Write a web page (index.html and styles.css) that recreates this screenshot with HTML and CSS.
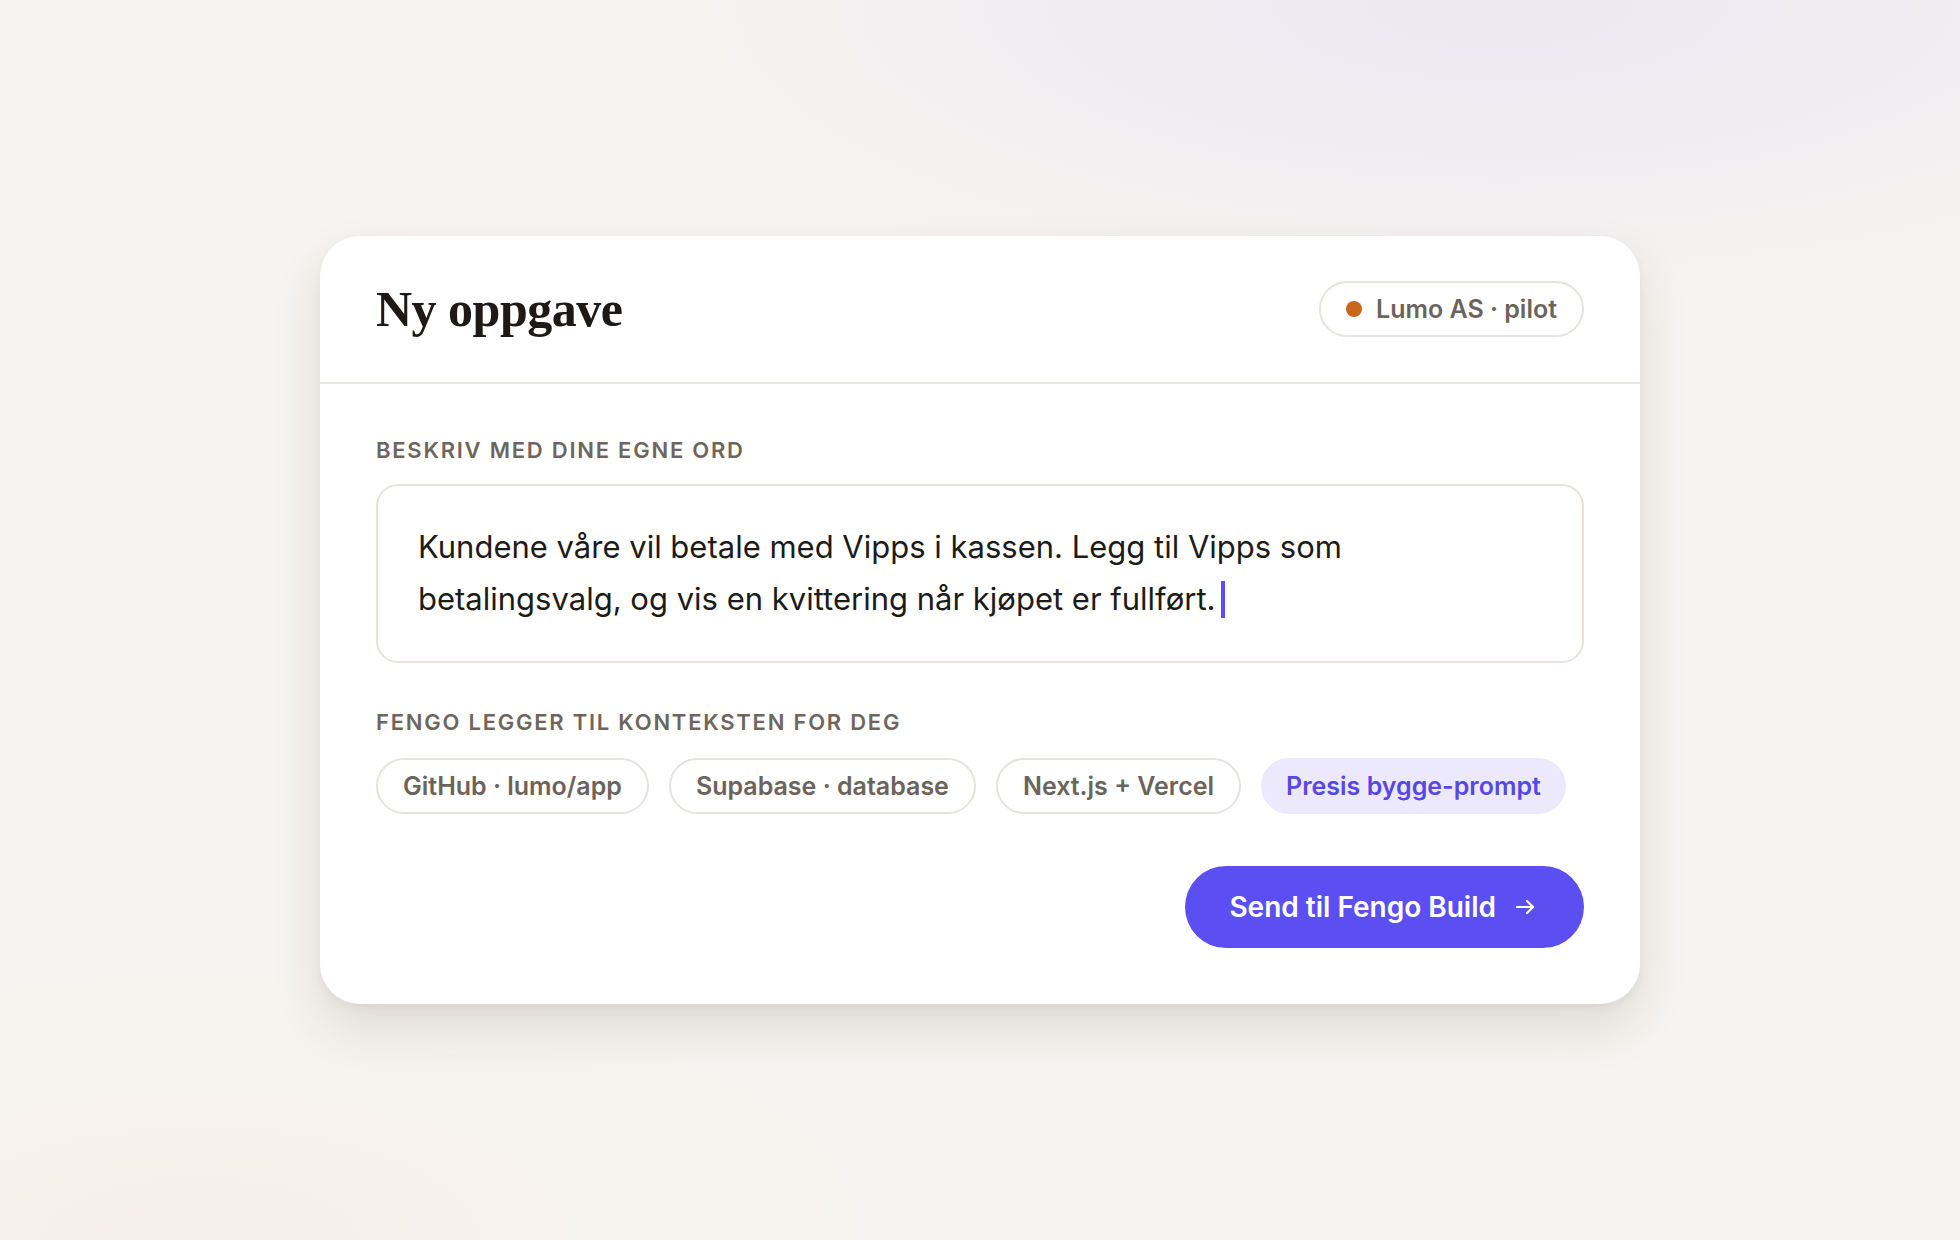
FILE: index.html
```html
<!DOCTYPE html>
<html lang="no">
<head>
    <meta charset="UTF-8">
    <meta name="viewport" content="width=device-width, initial-scale=1.0">
    <title>Ny oppgave</title>
    <link rel="stylesheet" href="styles.css">
</head>
<body>
    <div class="task-card">
        <div class="task-header">
            <h1 class="task-title">Ny oppgave</h1>
            <div class="org-badge">
                <span class="org-dot"></span>
                <span>Lumo AS · pilot</span>
            </div>
        </div>

        <div class="task-body">
            <div class="field-label">Beskriv med dine egne ord</div>
            <div class="prompt-box">
                <p class="prompt-text">Kundene våre vil betale med Vipps i kassen. Legg til Vipps som betalingsvalg, og vis en kvittering når kjøpet er fullført.<span class="caret"></span></p>
            </div>

            <div class="field-label second">Fengo legger til konteksten for deg</div>
            <div class="chips">
                <span class="chip">GitHub · lumo/app</span>
                <span class="chip">Supabase · database</span>
                <span class="chip">Next.js + Vercel</span>
                <span class="chip chip-accent">Presis bygge-prompt</span>
            </div>

            <div class="actions">
                <button class="send-btn">
                    <span>Send til Fengo Build</span>
                    <svg width="24" height="24" viewBox="0 0 24 24" fill="none" stroke="currentColor" stroke-width="2.2" stroke-linecap="round" stroke-linejoin="round">
                        <line x1="3" y1="12" x2="19" y2="12"></line>
                        <polyline points="13 6 19 12 13 18"></polyline>
                    </svg>
                </button>
            </div>
        </div>
    </div>
</body>
</html>
```

FILE: styles.css
```css
body {
    margin: 0;
    height: 100vh;
    display: flex;
    justify-content: center;
    align-items: center;
    font-family: Inter, "Noto Sans", sans-serif;
    background-color: #f6f4f0;
    background-image:
        radial-gradient(ellipse 1200px 420px at 1500px 0px, rgba(230, 227, 242, 0.75), rgba(230, 227, 242, 0) 75%),
        radial-gradient(ellipse 900px 360px at 200px 1240px, rgba(246, 236, 228, 0.6), rgba(246, 236, 228, 0) 75%);
}

.task-card {
    width: 1320px;
    background-color: #ffffff;
    border-radius: 40px;
    box-shadow: 0 24px 50px rgba(60, 45, 30, 0.12), 0 4px 10px rgba(60, 45, 30, 0.05);
}

.task-header {
    height: 146px;
    padding: 0 56px;
    display: flex;
    align-items: center;
    justify-content: space-between;
    border-bottom: 2px solid #e9e6e2;
}

.task-title {
    margin: 0;
    font-family: "Liberation Serif", serif;
    font-weight: 700;
    font-size: 50px;
    letter-spacing: -0.5px;
    color: #1c1917;
}

.org-badge {
    display: flex;
    align-items: center;
    gap: 14px;
    height: 52px;
    padding: 0 25px;
    border: 2px solid #e6e3df;
    border-radius: 999px;
    font-size: 25px;
    font-weight: 600;
    color: #6b645c;
}

.org-dot {
    width: 16px;
    height: 16px;
    border-radius: 50%;
    background-color: #c8661e;
}

.task-body {
    padding: 53px 56px 56px;
}

.field-label {
    font-size: 22px;
    line-height: 26px;
    font-weight: 600;
    letter-spacing: 0.08em;
    text-transform: uppercase;
    color: #6e665d;
}

.field-label.second {
    margin-top: 46px;
}

.prompt-box {
    margin-top: 21px;
    padding: 35px 40px 36px;
    border: 2px solid #e6e3df;
    border-radius: 22px;
}

.prompt-text {
    margin: 0;
    max-width: 1000px;
    font-size: 31px;
    line-height: 52px;
    color: #1d1b18;
}

.caret {
    display: inline-block;
    width: 4px;
    height: 37px;
    margin-left: 5px;
    vertical-align: -8px;
    background-color: #5b4ff2;
}

.chips {
    display: flex;
    gap: 20px;
    margin-top: 23px;
}

.chip {
    display: flex;
    align-items: center;
    height: 52px;
    padding: 0 25px;
    border: 2px solid #e6e3df;
    border-radius: 999px;
    font-size: 25px;
    font-weight: 600;
    color: #6b645c;
}

.chip-accent {
    padding: 0 23px;
    background-color: #ede9fd;
    border-color: #ede9fd;
    color: #5848e2;
}

.actions {
    display: flex;
    justify-content: flex-end;
    margin-top: 52px;
}

.send-btn {
    display: flex;
    align-items: center;
    gap: 18px;
    height: 82px;
    padding: 0 46px 0 44px;
    border: none;
    border-radius: 999px;
    background-color: #5b4ff2;
    color: #ffffff;
    font-family: Inter, "Noto Sans", sans-serif;
    font-size: 28px;
    font-weight: 600;
    cursor: pointer;
}
```
